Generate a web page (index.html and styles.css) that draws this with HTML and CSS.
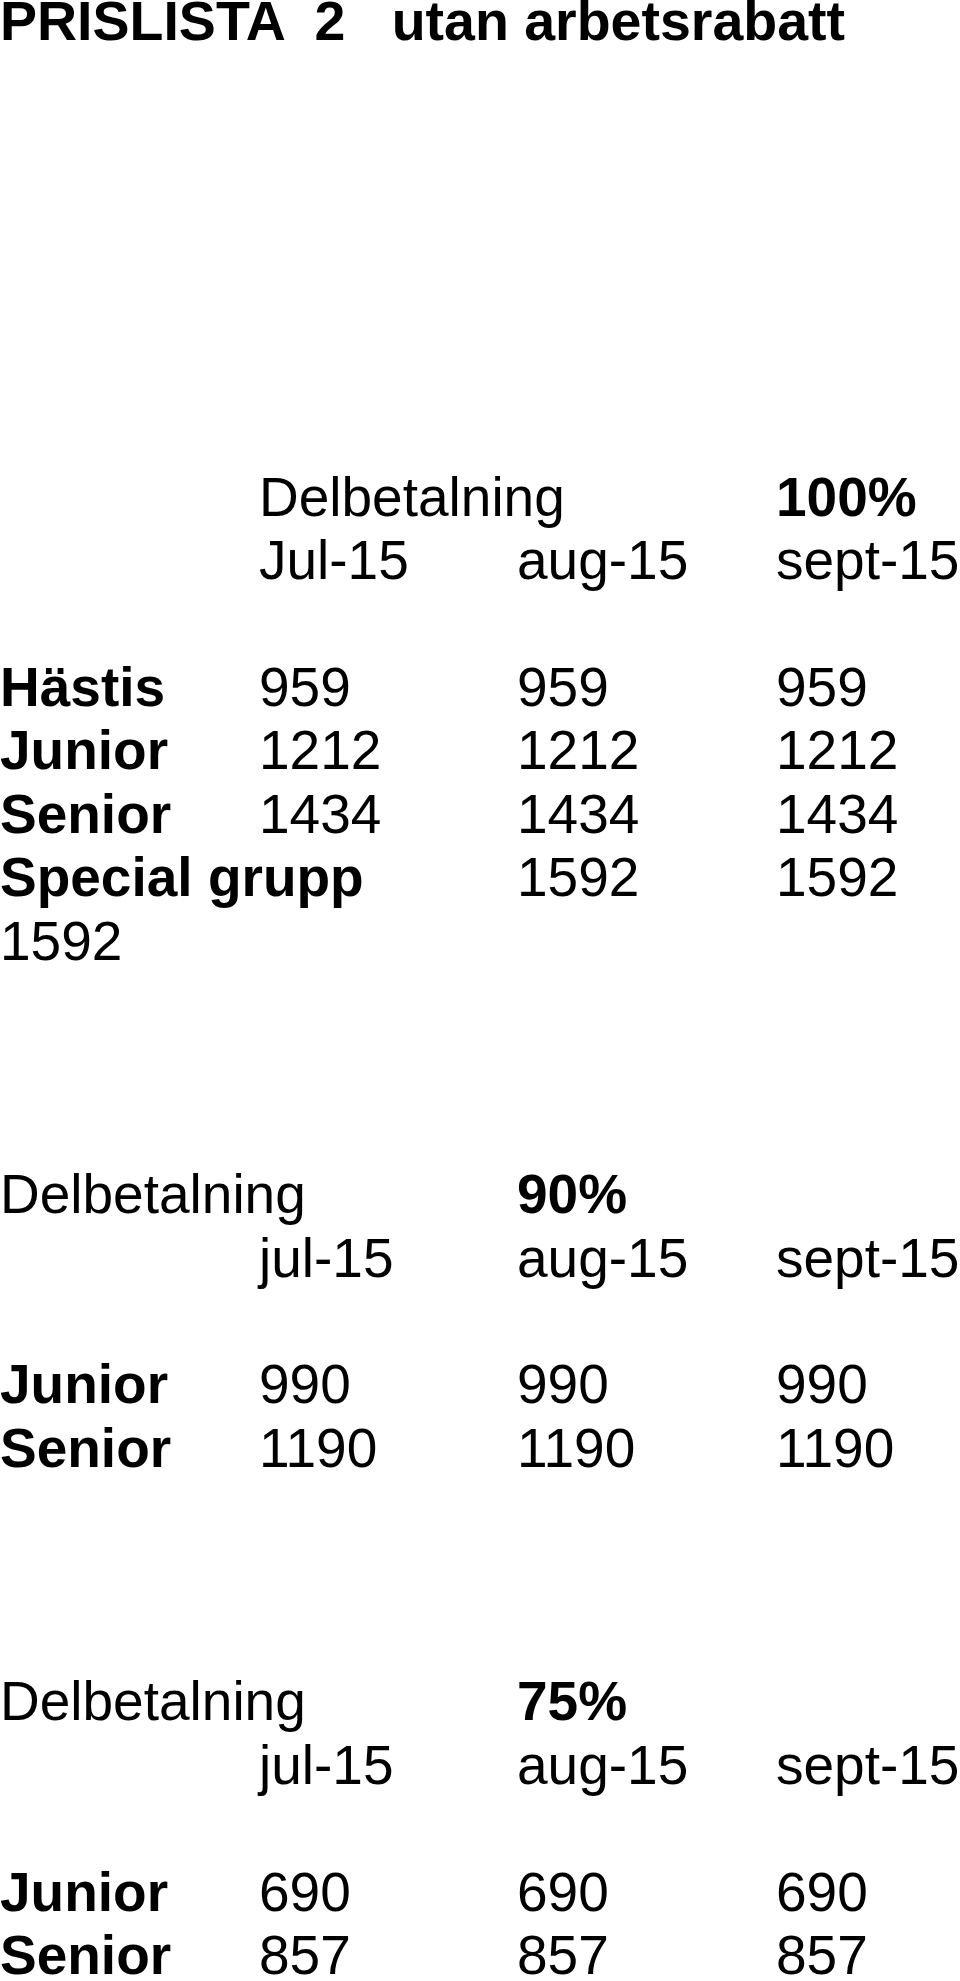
FILE: index.html
```html
<!DOCTYPE html>
<html lang="sv">
<head>
<meta charset="utf-8">
<title>Prislista 2</title>
<link rel="stylesheet" href="styles.css">
</head>
<body>
<main class="sheet">
  <h1 class="title">PRISLISTA  2   utan arbetsrabatt</h1>

  <section class="block block-first">
    <div class="head">
      <div class="row">
        <span class="c1">Delbetalning</span>
        <span class="c3 b">100%</span>
      </div>
      <div class="row">
        <span class="c1">Jul-15</span>
        <span class="c2">aug-15</span>
        <span class="c3">sept-15</span>
      </div>
    </div>
    <div class="row">
      <span class="c0 b">Hästis</span>
      <span class="c1">959</span>
      <span class="c2">959</span>
      <span class="c3">959</span>
    </div>
    <div class="row">
      <span class="c0 b">Junior</span>
      <span class="c1">1212</span>
      <span class="c2">1212</span>
      <span class="c3">1212</span>
    </div>
    <div class="row">
      <span class="c0 b">Senior</span>
      <span class="c1">1434</span>
      <span class="c2">1434</span>
      <span class="c3">1434</span>
    </div>
    <div class="row">
      <span class="c0 wide b">Special grupp</span>
      <span class="c2">1592</span>
      <span class="c3">1592</span>
    </div>
    <div class="row">
      <span class="c0">1592</span>
    </div>
  </section>

  <section class="block">
    <div class="head">
      <div class="row">
        <span class="c0">Delbetalning</span>
        <span class="c2 b">90%</span>
      </div>
      <div class="row">
        <span class="c1">jul-15</span>
        <span class="c2">aug-15</span>
        <span class="c3">sept-15</span>
      </div>
    </div>
    <div class="row">
      <span class="c0 b">Junior</span>
      <span class="c1">990</span>
      <span class="c2">990</span>
      <span class="c3">990</span>
    </div>
    <div class="row">
      <span class="c0 b">Senior</span>
      <span class="c1">1190</span>
      <span class="c2">1190</span>
      <span class="c3">1190</span>
    </div>
  </section>

  <section class="block">
    <div class="head">
      <div class="row">
        <span class="c0">Delbetalning</span>
        <span class="c2 b">75%</span>
      </div>
      <div class="row">
        <span class="c1">jul-15</span>
        <span class="c2">aug-15</span>
        <span class="c3">sept-15</span>
      </div>
    </div>
    <div class="row">
      <span class="c0 b">Junior</span>
      <span class="c1">690</span>
      <span class="c2">690</span>
      <span class="c3">690</span>
    </div>
    <div class="row">
      <span class="c0 b">Senior</span>
      <span class="c1">857</span>
      <span class="c2">857</span>
      <span class="c3">857</span>
    </div>
  </section>
</main>
</body>
</html>
```

FILE: styles.css
```css
html, body {
  margin: 0;
  padding: 0;
  background: #ffffff;
}

.sheet {
  font-family: "Liberation Sans", Arial, sans-serif;
  color: #000000;
  font-size: 55px;
  line-height: 63.4px;
}

.title {
  margin: 0;
  font-size: 55.5px;
  font-weight: bold;
  line-height: 43px;
  white-space: pre;
}

.block {
  margin-top: 190.2px;
}

.block-first {
  margin-top: 422.9px;
}

.head {
  margin-bottom: 63.4px;
}

.row {
  display: grid;
  grid-template-columns: 259px 258px 259px 1fr;
  height: 63.4px;
  white-space: nowrap;
}

.row span {
  min-width: 0;
}

.c0 { grid-column: 1; }
.c1 { grid-column: 2; }
.c2 { grid-column: 3; }
.c3 { grid-column: 4; }
.wide { grid-column: 1 / 3; }

.b {
  font-weight: bold;
}
```
